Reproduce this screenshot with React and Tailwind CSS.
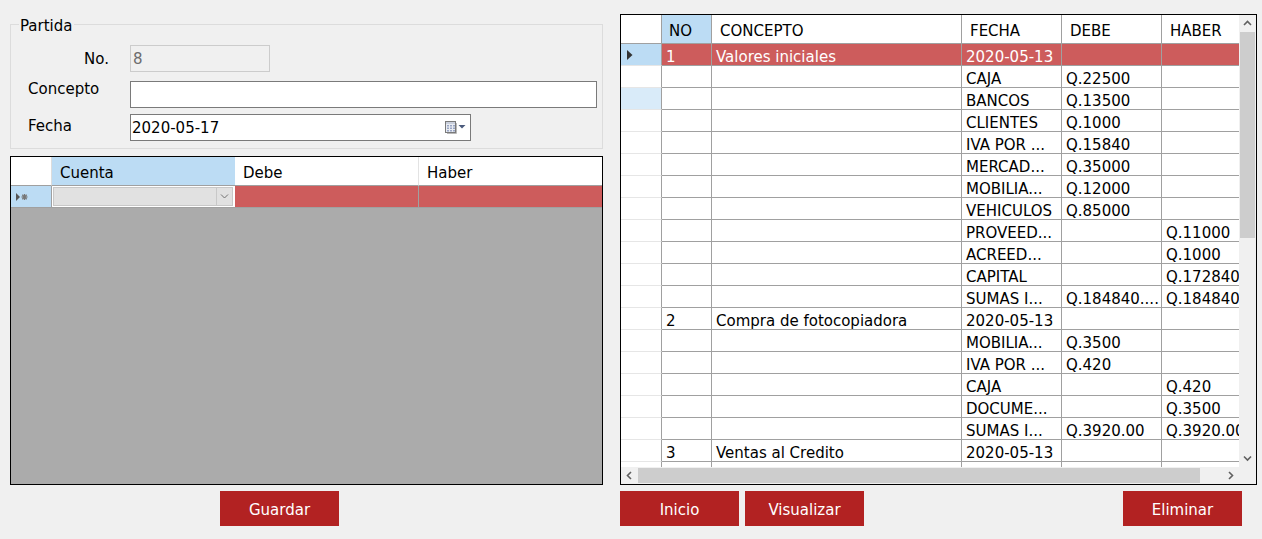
const rows = [
  { no: "1", concepto: "Valores iniciales", fecha: "2020-05-13", selected: true },
  { fecha: "CAJA", debe: "Q.22500" },
  { fecha: "BANCOS", debe: "Q.13500", hover: true },
  { fecha: "CLIENTES", debe: "Q.1000" },
  { fecha: "IVA POR ...", debe: "Q.15840" },
  { fecha: "MERCAD...", debe: "Q.35000" },
  { fecha: "MOBILIA...", debe: "Q.12000" },
  { fecha: "VEHICULOS", debe: "Q.85000" },
  { fecha: "PROVEED...", haber: "Q.11000" },
  { fecha: "ACREED...", haber: "Q.1000" },
  { fecha: "CAPITAL", haber: "Q.172840" },
  { fecha: "SUMAS I...", debe: "Q.184840....", haber: "Q.184840" },
  { no: "2", concepto: "Compra de fotocopiadora", fecha: "2020-05-13" },
  { fecha: "MOBILIA...", debe: "Q.3500" },
  { fecha: "IVA POR ...", debe: "Q.420" },
  { fecha: "CAJA", haber: "Q.420" },
  { fecha: "DOCUME...", haber: "Q.3500" },
  { fecha: "SUMAS I...", debe: "Q.3920.00", haber: "Q.3920.00" },
  { no: "3", concepto: "Ventas al Credito", fecha: "2020-05-13" },
  {},
];

function Chevron({ dir }) {
  const pts = {
    up: "1,5 4.5,1.5 8,5",
    down: "1,1.5 4.5,5 8,1.5",
    left: "5,1 1.5,4.5 5,8",
    right: "2,1 5.5,4.5 2,8",
  }[dir];
  const size = dir === "up" || dir === "down" ? { w: 9, h: 7 } : { w: 7, h: 9 };
  return (
    <svg width={size.w} height={size.h} viewBox={`0 0 ${size.w} ${size.h}`}>
      <polyline points={pts} fill="none" stroke="#606060" strokeWidth="1.6" />
    </svg>
  );
}

function CalendarIcon() {
  return (
    <svg width="22" height="14" viewBox="0 0 22 14">
      <rect x="1.5" y="1.5" width="10" height="11" fill="#e9ecf2" stroke="#7a7a7a" />
      <rect x="2" y="2" width="9" height="2" fill="#c9cfdc" />
      {[0, 1, 2].map((r) =>
        [0, 1, 2].map((c) => (
          <rect key={`${r}-${c}`} x={3 + c * 3} y={5 + r * 2.5} width="2" height="1.5" fill="#9aa6c4" />
        ))
      )}
      <line x1="12.5" y1="3" x2="12.5" y2="13.5" stroke="#b8b8b8" />
      <line x1="3" y1="13.5" x2="12.5" y2="13.5" stroke="#b8b8b8" />
      <polygon points="14.5,5 21.5,5 18,8.5" fill="#4b5a7c" />
    </svg>
  );
}

function Cell({ w, children, head }) {
  return (
    <div
      className={
        "shrink-0 overflow-hidden whitespace-nowrap px-[4px] border-r border-b border-[#a0a0a0] " +
        (head ? "h-[29px] leading-[32px] pl-[8px]" : "h-[22px] leading-[27px]") +
        " " +
        w
      }
    >
      {children}
    </div>
  );
}

function DataGrid() {
  return (
    <div className="w-[637px] h-[471px] border border-black flex flex-col bg-white">
      <div className="flex h-[452px]">
        <div className="w-[618px] h-[452px] overflow-hidden flex flex-col">
          <div className="flex shrink-0 bg-white">
            <div className="w-[41px] h-[29px] shrink-0 border-r border-b border-[#a0a0a0]" />
            <div className="w-[50px] h-[29px] shrink-0 overflow-hidden border-r border-b border-[#a0a0a0] bg-[#bcdcf4] pl-[7px] leading-[32px]">NO</div>
            <Cell head w="w-[250px]">CONCEPTO</Cell>
            <Cell head w="w-[100px]">FECHA</Cell>
            <Cell head w="w-[100px]">DEBE</Cell>
            <Cell head w="w-[100px]">HABER</Cell>
          </div>
          {rows.map((r, i) => (
            <div key={i} className={"flex shrink-0 " + (r.selected ? "bg-[#cd5c5c] text-white" : "bg-white text-black")}>
              <div
                className={
                  "w-[41px] h-[22px] shrink-0 border-r border-b border-r-[#a0a0a0] border-b-[#e6e6e6] flex items-center pl-[6px] " +
                  (r.selected ? "bg-[#bcdcf4]" : r.hover ? "bg-[#d9ebf9]" : "bg-white")
                }
              >
                {r.selected && (
                  <svg width="6" height="10" viewBox="0 0 6 10">
                    <polygon points="0,0 5.5,5 0,10" fill="#333333" />
                  </svg>
                )}
              </div>
              <Cell w="w-[50px]">{r.no}</Cell>
              <Cell w="w-[250px]">{r.concepto}</Cell>
              <Cell w="w-[100px]">{r.fecha}</Cell>
              <Cell w="w-[100px]">{r.debe}</Cell>
              <Cell w="w-[100px]">{r.haber}</Cell>
            </div>
          ))}
        </div>
        <div className="w-[17px] h-[452px] bg-[#f0f0f0] flex flex-col">
          <div className="h-[17px] flex items-center justify-center">
            <Chevron dir="up" />
          </div>
          <div className="h-[206px] mx-[1px] bg-[#cdcdcd]" />
          <div className="flex-1" />
          <div className="h-[17px] flex items-center justify-center">
            <Chevron dir="down" />
          </div>
        </div>
      </div>
      <div className="flex h-[17px] bg-[#f0f0f0]">
        <div className="w-[17px] flex items-center justify-center">
          <Chevron dir="left" />
        </div>
        <div className="w-[562px] my-[1px] bg-[#cdcdcd]" />
        <div className="flex-1" />
        <div className="w-[17px] flex items-center justify-center">
          <Chevron dir="right" />
        </div>
        <div className="w-[17px]" />
      </div>
    </div>
  );
}

function EntryGrid() {
  return (
    <div className="w-[593px] h-[329px] border border-black flex flex-col bg-[#ababab]">
      <div className="flex bg-white h-[29px] overflow-hidden">
        <div className="w-[41px] h-[29px] shrink-0 border-r border-b border-r-[#dcdcdc] border-b-[#a0a0a0]" />
        <div className="w-[183px] h-[29px] shrink-0 border-b border-[#a0a0a0] bg-[#bcdcf4] pl-[8px] leading-[32px]">Cuenta</div>
        <div className="w-[184px] h-[29px] shrink-0 border-r border-b border-r-[#e3e3e3] border-b-[#a0a0a0] pl-[8px] leading-[32px]">Debe</div>
        <div className="flex-1 h-[29px] border-b border-[#a0a0a0] pl-[8px] leading-[32px]">Haber</div>
      </div>
      <div className="flex h-[22px]">
        <div className="w-[41px] h-[22px] shrink-0 border-r border-b border-[#a0a0a0] bg-[#bcdcf4] flex items-center pl-[5px]">
          <svg width="13" height="8" viewBox="0 0 13 8">
            <polygon points="0,0 4,4 0,8" fill="#555555" />
            <g stroke="#777777" strokeWidth="1.3">
              <line x1="8.5" y1="1" x2="8.5" y2="7" />
              <line x1="5.5" y1="4" x2="11.5" y2="4" />
              <line x1="6.3" y1="1.8" x2="10.7" y2="6.2" />
              <line x1="10.7" y1="1.8" x2="6.3" y2="6.2" />
            </g>
          </svg>
        </div>
        <div className="w-[183px] h-[22px] shrink-0 border-b border-[#a0a0a0] bg-white p-[1px] pr-[2px]">
          <div className="h-full flex bg-[#e1e1e1] border border-[#c8c8c8]">
            <div className="flex-1" />
            <div className="w-[16px] border-l border-[#c8c8c8] flex items-center justify-center">
              <svg width="9" height="5" viewBox="0 0 9 5">
                <polyline points="1,0.5 4.5,4 8,0.5" fill="none" stroke="#707070" strokeWidth="1" />
              </svg>
            </div>
          </div>
        </div>
        <div className="w-[184px] h-[22px] shrink-0 border-r border-b border-[#a0a0a0] bg-[#cd5c5c]" />
        <div className="flex-1 h-[22px] border-b border-[#a0a0a0] bg-[#cd5c5c]" />
      </div>
      <div className="flex-1" />
    </div>
  );
}

function Button({ children, className = "" }) {
  return (
    <button className={"w-[119px] h-[35px] overflow-hidden bg-[#b22222] text-white text-[15px] leading-[39px] text-center " + className}>
      {children}
    </button>
  );
}

export default function App() {
  return (
    <div className="w-[1262px] h-[539px] bg-[#f0f0f0] flex font-['DejaVu_Sans',sans-serif] text-[15px] text-black overflow-hidden">
      <div className="ml-[10px] w-[593px] flex flex-col">
        <div className="mt-[24px] h-[125px] border border-[#dcdcdc] relative">
          <span className="absolute left-[8px] top-[-9px] px-[1px] bg-[#f0f0f0] leading-[20px]">Partida</span>
          <div className="flex items-start mt-[20px]">
            <div className="w-[98px] text-right pt-[4px] leading-[20px]">No.</div>
            <div className="ml-[21px] w-[140px] h-[27px] border border-[#cccccc] bg-[#f0f0f0] px-[2px] leading-[26px] text-[#6d6d6d]">8</div>
          </div>
          <div className="flex items-start mt-[9px]">
            <div className="w-[119px] pl-[17px] -mt-[2px] leading-[20px]">Concepto</div>
            <div className="w-[467px] h-[27px] border border-[#7a7a7a] bg-white" />
          </div>
          <div className="flex items-start mt-[6px]">
            <div className="w-[119px] pl-[17px] pt-[2px] leading-[20px]">Fecha</div>
            <div className="w-[341px] h-[27px] border border-[#7a7a7a] bg-white flex items-start pl-[1px]">
              <span className="leading-[27px] flex-1">2020-05-17</span>
              <div className="mt-[5px] mr-[4px]">
                <CalendarIcon />
              </div>
            </div>
          </div>
        </div>
        <div className="mt-[7px]">
          <EntryGrid />
        </div>
        <div className="mt-[6px] flex">
          <Button className="ml-[210px]">Guardar</Button>
        </div>
      </div>
      <div className="ml-[17px] w-[637px] flex flex-col">
        <div className="mt-[14px]">
          <DataGrid />
        </div>
        <div className="mt-[6px] flex">
          <Button>Inicio</Button>
          <Button className="ml-[6px]">Visualizar</Button>
          <Button className="ml-[259px]">Eliminar</Button>
        </div>
      </div>
    </div>
  );
}
